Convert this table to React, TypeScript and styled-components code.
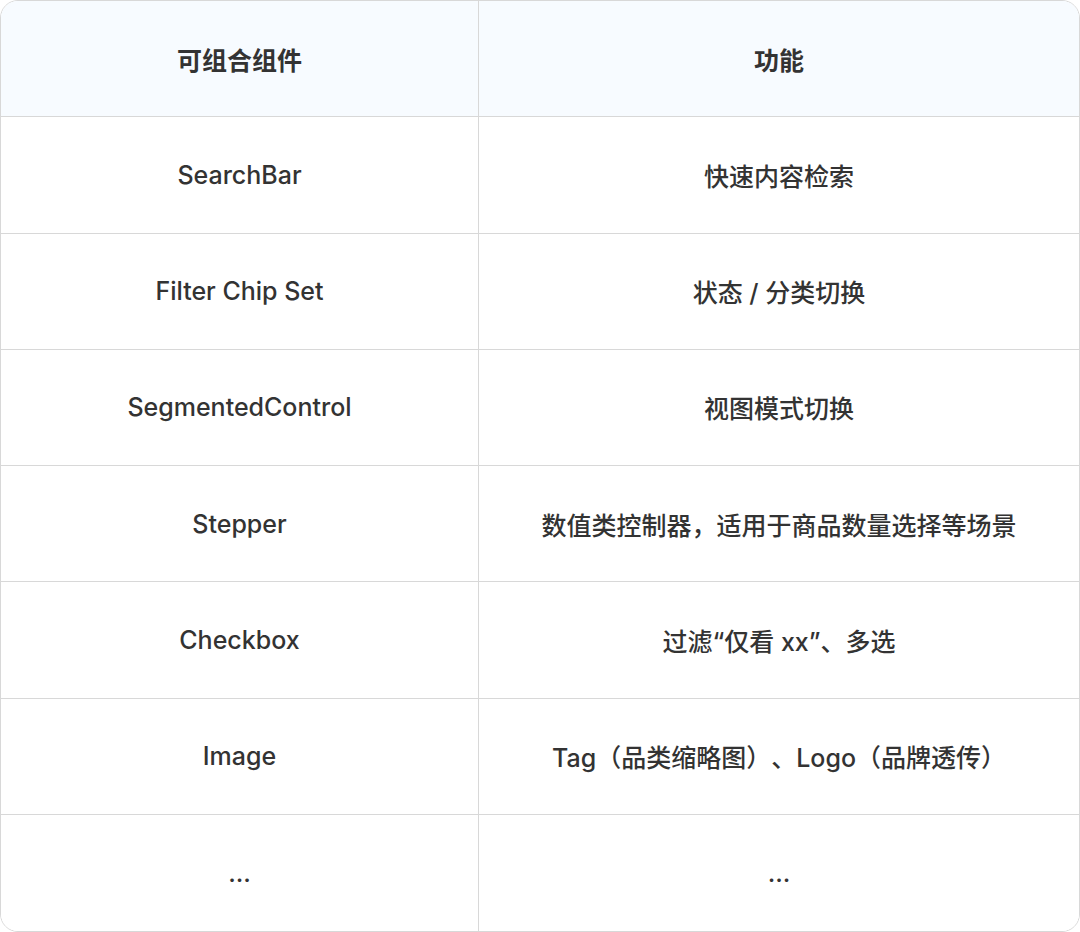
import React from "react";
import styled, { createGlobalStyle } from "styled-components";

const Global = createGlobalStyle`
  html, body { margin: 0; padding: 0; background: #ffffff; }
  body { font-family: "Inter", "Noto Sans CJK SC", sans-serif; }
`;

const Table = styled.div`
  box-sizing: border-box;
  width: 1080px;
  height: 932px;
  border: 1.5px solid #d8d8d8;
  border-radius: 18px;
  overflow: hidden;
  display: grid;
  grid-template-columns: 478px 1fr;
  grid-template-rows: repeat(8, 1fr);
  background: #ffffff;
`;

const Cell = styled.div<{ $head?: boolean; $right?: boolean; $last?: boolean }>`
  display: flex;
  align-items: center;
  justify-content: center;
  text-align: center;
  font-size: 25px;
  color: #333333;
  font-weight: ${(p) => (p.$head ? 600 : 500)};
  background: ${(p) => (p.$head ? "#f7fbff" : "#ffffff")};
  border-right: ${(p) => (p.$right ? "none" : "1.5px solid #d8d8d8")};
  border-bottom: ${(p) => (p.$last ? "none" : "1.5px solid #d8d8d8")};
  text-spacing-trim: space-all;
`;

const rows: [string, string][] = [
  ["SearchBar", "快速内容检索"],
  ["Filter Chip Set", "状态 / 分类切换"],
  ["SegmentedControl", "视图模式切换"],
  ["Stepper", "数值类控制器，适用于商品数量选择等场景"],
  ["Checkbox", "过滤“仅看 xx”、多选"],
  ["Image", "Tag（品类缩略图）、Logo（品牌透传）"],
  ["...", "..."],
];

export default function App() {
  return (
    <>
      <Global />
      <Table>
        <Cell $head>可组合组件</Cell>
        <Cell $head $right>功能</Cell>
        {rows.map(([a, b], i) => (
          <React.Fragment key={i}>
            <Cell $last={i === rows.length - 1}>{a}</Cell>
            <Cell $right $last={i === rows.length - 1}>{b}</Cell>
          </React.Fragment>
        ))}
      </Table>
    </>
  );
}
